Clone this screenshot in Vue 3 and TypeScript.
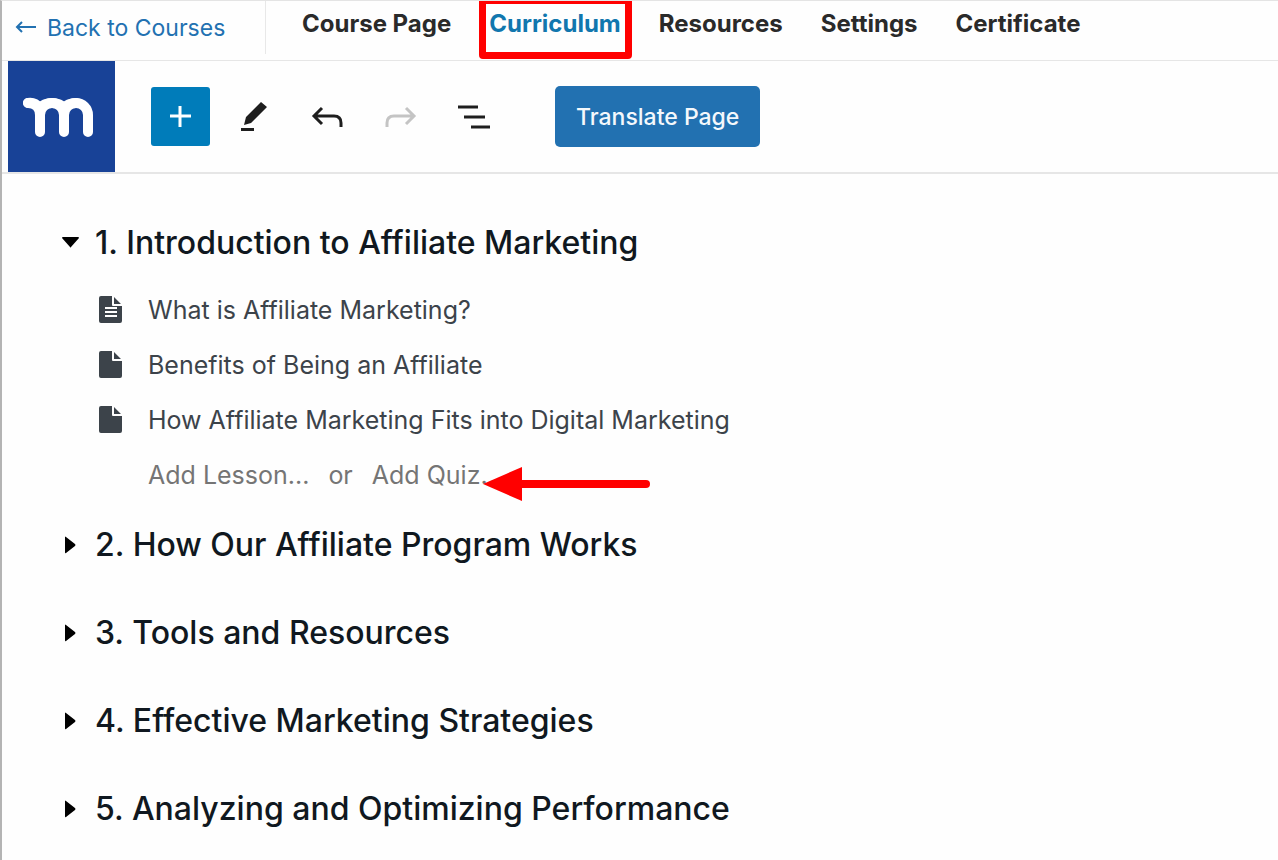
<script setup lang="ts">
import { ref } from 'vue'

interface Lesson {
  title: string
  kind: 'text' | 'blank'
}
interface Section {
  title: string
  open: boolean
  lessons: Lesson[]
}

const tabs: string[] = ['Course Page', 'Curriculum', 'Resources', 'Settings', 'Certificate']
const activeTab = ref('Curriculum')

const sections = ref<Section[]>([
  {
    title: 'Introduction to Affiliate Marketing',
    open: true,
    lessons: [
      { title: 'What is Affiliate Marketing?', kind: 'text' },
      { title: 'Benefits of Being an Affiliate', kind: 'blank' },
      { title: 'How Affiliate Marketing Fits into Digital Marketing', kind: 'blank' },
    ],
  },
  { title: 'How Our Affiliate Program Works', open: false, lessons: [] },
  { title: 'Tools and Resources', open: false, lessons: [] },
  { title: 'Effective Marketing Strategies', open: false, lessons: [] },
  { title: 'Analyzing and Optimizing Performance', open: false, lessons: [] },
])
</script>

<template>
  <div class="page">
    <header class="topbar">
      <a class="back" href="#courses">
        <svg class="back-arrow" width="22" height="14" viewBox="0 0 22 14" aria-hidden="true">
          <path d="M21 6H2M7 1L2 6L7 11" />
        </svg>
        <span>Back to Courses</span>
      </a>
      <nav class="tabs" aria-label="Course">
        <a
          v-for="tab in tabs"
          :key="tab"
          href="#"
          class="tab"
          :class="{ active: tab === activeTab }"
          @click.prevent="activeTab = tab"
        >{{ tab }}<span v-if="tab === 'Curriculum'" class="frame"></span></a>
      </nav>
    </header>

    <div class="toolbar">
      <a class="logo" href="#home" aria-label="Home">
        <svg width="107" height="111" viewBox="0 0 107 111" aria-hidden="true">
          <path d="M20 42C27 42 32 47 32 54V71M32 54A12 12 0 0 1 56 54V71M56 54A12 12 0 0 1 80 54V71" />
          <path d="M20 42C26 41 29 44 32 47Q36 42 44 42Q52 42 56 47Q60 42 68 42" />
        </svg>
      </a>
      <button class="add" type="button" aria-label="Add block">
        <svg width="24" height="24" viewBox="0 0 24 24" aria-hidden="true"><path d="M11 1V22M1 11H22" /></svg>
      </button>
      <div class="tools">
        <button class="tool" type="button" aria-label="Edit">
          <svg width="34" height="34" viewBox="0 0 34 34" aria-hidden="true">
            <path class="solid" d="M24 2L30 7L14 23L7 25L9 17ZM4 28H17V31H4Z" />
          </svg>
        </button>
        <button class="tool" type="button" aria-label="Undo">
          <svg width="34" height="34" viewBox="0 0 34 34" aria-hidden="true">
            <path d="M12 8L4 16L12 24M4 16H24Q31 16 31 23V27" />
          </svg>
        </button>
        <button class="tool" type="button" aria-label="Redo" disabled>
          <svg width="34" height="34" viewBox="0 0 34 34" aria-hidden="true">
            <path d="M23 8L31 16L23 24M31 16H11Q4 16 4 23V27" />
          </svg>
        </button>
        <button class="tool" type="button" aria-label="List view">
          <svg width="34" height="34" viewBox="0 0 34 34" aria-hidden="true">
            <path d="M2 7H22M8 17H29M15 27H34" />
          </svg>
        </button>
      </div>
      <button class="translate" type="button">Translate Page</button>
    </div>

    <main class="curriculum">
      <section v-for="(section, i) in sections" :key="section.title" class="section" :class="{ open: section.open }">
        <h2>
          <button class="heading" type="button" :aria-expanded="section.open" @click="section.open = !section.open">
            <svg class="caret" width="18" height="18" viewBox="0 0 18 18" aria-hidden="true">
              <path v-if="section.open" d="M0 4Q0 3 1 3H16Q17 3 17 4L9 13Q8 14 8 13Z" />
              <path v-else d="M3 1Q3 0 4 1L13 8Q14 9 13 10L4 17Q3 18 3 16Z" />
            </svg>
            <span>{{ i + 1 }}. {{ section.title }}</span>
          </button>
        </h2>
        <ul v-if="section.open" class="lessons">
          <li v-for="lesson in section.lessons" :key="lesson.title" class="lesson">
            <svg width="24" height="28" viewBox="0 0 24 28" aria-hidden="true">
              <path class="sheet" d="M2 0H13V9Q13 10 14 10H23V25Q23 27 21 27H2Q0 27 0 25V2Q0 0 2 0ZM15 1L22 8H15Z" />
              <path v-if="lesson.kind === 'text'" class="rows" d="M6 12H18M6 16H18M6 20H18" />
            </svg>
            <span>{{ lesson.title }}</span>
          </li>
          <li class="lesson actions">
            <button type="button">Add Lesson...</button>
            <span>or</span>
            <button type="button" class="quiz">Add Quiz...
              <svg class="pointer" width="168" height="34" viewBox="0 0 168 34" aria-hidden="true">
                <path class="head" d="M0 17L39 0V34Z" />
                <path class="shaft" d="M38 17H163" />
              </svg>
            </button>
          </li>
        </ul>
      </section>
    </main>
  </div>
</template>

<style>
body {
  margin: 0;
  background: #fefefe;
}
</style>

<style scoped>
.page {
  box-sizing: border-box;
  min-height: 100vh;
  border-top: 1px solid #e4e4e4;
  border-left: 2px solid #b4b4b4;
  overflow: hidden;
  font-family: Inter, "Liberation Sans", sans-serif;
  color: #101820;
}
a {
  text-decoration: none;
}
button {
  margin: 0;
  padding: 0;
  border: 0;
  background: none;
  font: inherit;
  color: inherit;
  cursor: pointer;
}
.topbar {
  display: flex;
  align-items: flex-start;
  height: 59px;
  border-bottom: 1px solid #e6e6e6;
}
.back {
  box-sizing: border-box;
  display: flex;
  align-items: center;
  gap: 10px;
  width: 264px;
  height: 53px;
  padding-left: 13px;
  border-right: 1px solid #e8e8e8;
  font-size: 23px;
  color: #2271b1;
}
.back-arrow {
  fill: none;
  stroke: #2271b1;
  stroke-width: 2;
}
.tabs {
  display: flex;
  gap: 38px;
  padding-left: 36px;
}
.tab {
  position: relative;
  font-size: 24px;
  line-height: 46px;
  font-weight: 700;
  color: #2a2a2a;
}
.tab.active {
  color: #1177ae;
}
.frame {
  position: absolute;
  inset: -4px -11px -12px -10px;
  border: 7px solid #ff0000;
  border-radius: 4px;
}
.toolbar {
  display: flex;
  align-items: center;
  height: 111px;
  padding-left: 6px;
  border-bottom: 2px solid #e6e6e6;
}
.logo {
  height: 111px;
  background: #184297;
}
.logo svg {
  display: block;
  fill: none;
  stroke: #ffffff;
  stroke-width: 10;
  stroke-linecap: round;
  stroke-linejoin: round;
}
.add {
  display: grid;
  place-items: center;
  width: 59px;
  height: 59px;
  margin-left: 36px;
  border-radius: 3px;
  background: #007cba;
}
.add svg {
  stroke: #ffffff;
  stroke-width: 3;
}
.tools {
  display: flex;
  gap: 39px;
  margin-left: 27px;
}
.tool svg {
  display: block;
  fill: none;
  stroke: #1e1e1e;
  stroke-width: 3;
}
.tool .solid {
  fill: #1e1e1e;
  stroke: none;
}
.tool:disabled svg {
  stroke: #c4c4c4;
}
.translate {
  height: 61px;
  margin-left: 65px;
  padding: 0 21px;
  border-radius: 5px;
  background: #2271b1;
  font-size: 23px;
  font-weight: 500;
  color: #f4f8fc;
}
.curriculum {
  padding: 49px 24px 0 60px;
}
.section {
  margin-bottom: 48px;
}
.section.open {
  margin-bottom: 23px;
}
h2 {
  margin: 0;
  font-size: 32px;
  line-height: 40px;
  font-weight: 500;
}
.heading {
  display: flex;
  align-items: center;
  gap: 15px;
  text-align: left;
}
.caret {
  fill: #000000;
}
.lessons {
  margin: 19px 0 0;
  padding: 0 0 0 37px;
  list-style: none;
}
.lesson {
  display: flex;
  align-items: center;
  gap: 25px;
  height: 55px;
  font-size: 25px;
  color: #3c434a;
}
.sheet {
  fill: #3c434a;
}
.rows {
  stroke: #ffffff;
  stroke-width: 2;
}
.actions {
  gap: 19px;
  padding-left: 49px;
  color: #757575;
}
.quiz {
  position: relative;
}
.pointer {
  position: absolute;
  left: 111px;
  top: 7px;
}
.head {
  fill: #ff0000;
}
.shaft {
  stroke: #ff0000;
  stroke-width: 8;
  stroke-linecap: round;
}
</style>
